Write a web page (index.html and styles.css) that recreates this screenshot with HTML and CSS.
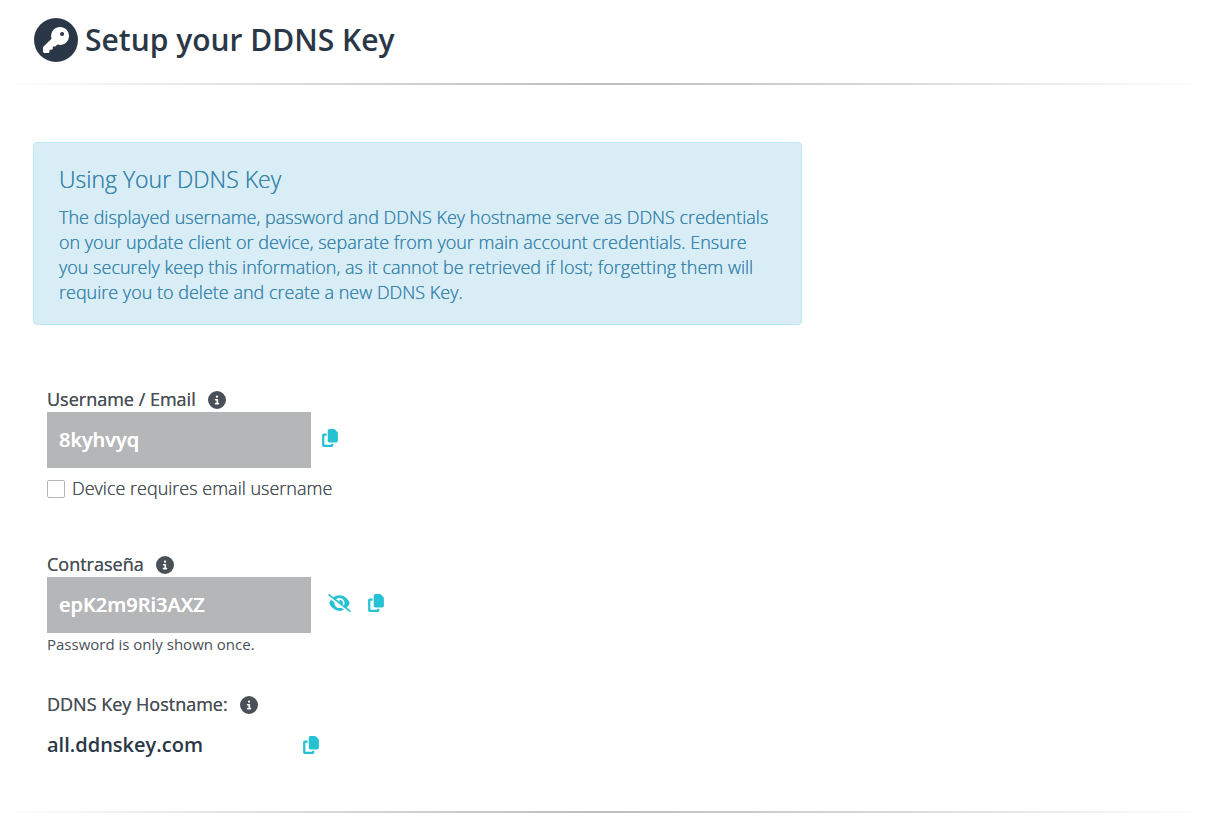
FILE: index.html
```html
<!DOCTYPE html>
<html lang="en">
<head>
<meta charset="utf-8">
<meta name="viewport" content="width=device-width, initial-scale=1">
<title>Setup your DDNS Key</title>
<link rel="stylesheet" href="styles.css">
</head>
<body>
<svg class="sprite" aria-hidden="true">
  <symbol id="copy" viewBox="0 0 448 512"><path d="M208 0L332.1 0c12.7 0 24.9 5.1 33.9 14.1l67.9 67.9c9 9 14.1 21.2 14.1 33.9L448 336c0 26.5-21.5 48-48 48l-192 0c-26.5 0-48-21.5-48-48l0-288c0-26.5 21.5-48 48-48zM48 128l80 0 0 64-64 0 0 256 192 0 0-32 64 0 0 48c0 26.5-21.5 48-48 48L48 512c-26.5 0-48-21.5-48-48L0 176c0-26.5 21.5-48 48-48z"/></symbol>
  <symbol id="info" viewBox="0 0 512 512"><path d="M256 512A256 256 0 1 0 256 0a256 256 0 1 0 0 512zM216 336h24V272H216c-13.3 0-24-10.7-24-24s10.7-24 24-24h48c13.3 0 24 10.7 24 24v88h8c13.3 0 24 10.7 24 24s-10.7 24-24 24H216c-13.3 0-24-10.7-24-24s10.7-24 24-24zm40-208a32 32 0 1 1 0 64 32 32 0 1 1 0-64z"/></symbol>
  <symbol id="eye-slash" viewBox="0 0 640 512"><path d="M38.8 5.1C28.4-3.1 13.3-1.2 5.1 9.2S-1.2 34.7 9.2 42.9l592 464c10.4 8.2 25.5 6.3 33.7-4.1s6.3-25.5-4.1-33.7L525.6 386.7c39.6-40.6 66.4-86.1 79.9-118.4c3.3-7.9 3.3-16.7 0-24.6c-14.9-35.7-46.2-87.7-93-131.1C465.5 68.8 400.8 32 320 32c-68.2 0-125 26.3-169.3 60.8L38.8 5.1zM223.1 149.5C248.6 126.2 282.7 112 320 112c79.5 0 144 64.5 144 144c0 24.9-6.3 48.3-17.4 68.7L408 294.5c8.4-19.3 10.6-41.4 4.8-63.3c-11.1-41.5-47.8-69.4-88.6-71.1c-5.8-.2-9.2 6.1-7.4 11.7c2.1 6.4 3.3 13.2 3.3 20.3c0 10.2-2.4 19.8-6.6 28.3l-90.3-70.8zM373 389.9c-16.4 6.5-34.3 10.1-53 10.1c-79.5 0-144-64.5-144-144c0-6.9 .5-13.6 1.4-20.2L83.1 161.5C60.3 191.2 44 220.8 34.5 243.7c-3.3 7.9-3.3 16.7 0 24.6c14.9 35.7 46.2 87.7 93 131.1C174.5 443.2 239.2 480 320 480c47.8 0 89.9-12.9 126.2-32.5L373 389.9z"/></symbol>
  <symbol id="key" viewBox="0 0 512 512"><path d="M336 352c97.2 0 176-78.8 176-176S433.2 0 336 0S160 78.8 160 176c0 18.7 2.9 36.8 8.3 53.7L7 391c-4.5 4.5-7 10.6-7 17v80c0 13.3 10.7 24 24 24h80c13.3 0 24-10.7 24-24V448h40c13.3 0 24-10.7 24-24V384h40c6.4 0 12.5-2.5 17-7l33.3-33.3c16.9 5.4 35 8.3 53.7 8.3zM376 96a40 40 0 1 1 0 80 40 40 0 1 1 0-80z"/></symbol>
</svg>

<header class="page-header">
  <span class="badge"><svg class="badge-icon" aria-hidden="true"><use href="#key"/></svg></span>
  <h1 class="title">Setup your DDNS Key</h1>
</header>
<hr class="rule">

<main class="content">
  <section class="notice">
    <h2 class="notice-title">Using Your DDNS Key</h2>
    <p class="notice-text">The displayed username, password and DDNS Key hostname serve as DDNS credentials on your update client or device, separate from your main account credentials. Ensure you securely keep this information, as it cannot be retrieved if lost; forgetting them will require you to delete and create a new DDNS Key.</p>
  </section>

  <form class="fields">
    <div class="field">
      <div class="label-row">
        <label for="username">Username / Email</label>
        <button type="button" class="icon-button" aria-label="About the username"><svg class="info-icon"><use href="#info"/></svg></button>
      </div>
      <div class="value-row">
        <input class="value-box" id="username" type="text" value="8kyhvyq" readonly>
        <button type="button" class="icon-button action" aria-label="Copy username"><svg class="copy-icon"><use href="#copy"/></svg></button>
      </div>
      <div class="check-row">
        <input class="check" id="email-username" type="checkbox">
        <label for="email-username">Device requires email username</label>
      </div>
    </div>

    <div class="field">
      <div class="label-row">
        <label for="password">Contraseña</label>
        <button type="button" class="icon-button" aria-label="About the password"><svg class="info-icon"><use href="#info"/></svg></button>
      </div>
      <div class="value-row value-row-wide">
        <input class="value-box" id="password" type="text" value="epK2m9Ri3AXZ" readonly>
        <button type="button" class="icon-button action" aria-label="Hide password"><svg class="eye-icon"><use href="#eye-slash"/></svg></button>
        <button type="button" class="icon-button action" aria-label="Copy password"><svg class="copy-icon"><use href="#copy"/></svg></button>
      </div>
      <p class="hint">Password is only shown once.</p>
    </div>

    <div class="field">
      <div class="label-row">
        <span>DDNS Key Hostname:</span>
        <button type="button" class="icon-button" aria-label="About the hostname"><svg class="info-icon"><use href="#info"/></svg></button>
      </div>
      <div class="host-row">
        <span class="host">all.ddnskey.com</span>
        <button type="button" class="icon-button action" aria-label="Copy hostname"><svg class="copy-icon"><use href="#copy"/></svg></button>
      </div>
    </div>
  </form>
</main>
<hr class="rule">
</body>
</html>
```
FILE: styles.css
```css
* {
  box-sizing: border-box;
}

body {
  margin: 0;
  background: #fff;
  color: #495057;
  font: 300 18px/25px "Open Sans", sans-serif;
}

h1,
h2,
p {
  margin: 0;
}

svg {
  display: block;
  fill: currentColor;
}

.sprite {
  position: absolute;
  width: 0;
  height: 0;
}

.page-header {
  display: flex;
  align-items: center;
  gap: 7px;
  padding: 18px 34px 21px;
  color: #2a3746;
}

.badge {
  display: grid;
  place-items: center;
  flex: none;
  width: 44px;
  height: 44px;
  border-radius: 50%;
  background: #2a3746;
  color: #fff;
}

.badge-icon {
  width: 26px;
  height: 26px;
}

.title {
  font-size: 30px;
  line-height: 44px;
  font-weight: 600;
}

.rule {
  height: 2px;
  margin: 0;
  border: 0;
  background: linear-gradient(to right, #fff, #d4d4d6 30%, #bebec2 50%, #d4d4d6 70%, #fff);
}

.content {
  padding: 57px 33px 52px;
}

.notice {
  max-width: 769px;
  padding: 20px 25px 19px;
  border: 1px solid #bce8f1;
  border-radius: 4px;
  background: #d9edf7;
  color: #3a87ad;
  text-shadow: 0 0 currentColor;
}

.notice-title {
  margin-bottom: 9px;
  font-size: 23px;
  line-height: 33px;
  font-weight: 300;
}

.fields {
  display: flex;
  flex-direction: column;
  padding: 62px 14px 0;
}

.field {
  display: flex;
  flex-direction: column;
  margin-bottom: 37px;
}

.field:first-child {
  margin-bottom: 51px;
}

.field:last-child {
  margin-bottom: 0;
}

.label-row {
  display: flex;
  align-items: center;
  gap: 12px;
  font-weight: 400;
  text-shadow: 0 0 currentColor;
}

.icon-button {
  flex: none;
  padding: 0;
  border: 0;
  background: none;
  color: inherit;
  cursor: pointer;
}

.action {
  color: #26c1d2;
}

.info-icon {
  width: 18px;
  height: 18px;
}

.copy-icon {
  width: 16px;
  height: 18px;
}

.eye-icon {
  width: 23px;
  height: 18px;
}

.value-row {
  display: flex;
  align-items: center;
  gap: 11px;
}

.value-row .action {
  margin-bottom: 4px;
}

.value-row-wide {
  gap: 17px;
}

.value-box {
  width: 264px;
  height: 56px;
  padding: 0 12px 2px;
  border: 0;
  border-radius: 0;
  background: #b5b6b8;
  color: #fff;
  font: 600 20px/28px "Open Sans", sans-serif;
  text-shadow: 0 0 currentColor;
}

.check-row {
  display: flex;
  align-items: center;
  gap: 7px;
  margin-top: 8px;
  text-shadow: 0 0 currentColor;
}

.check {
  appearance: none;
  width: 18px;
  height: 18px;
  margin: 0;
  border: 1px solid #b5b6b8;
  border-radius: 2px;
  background: #fff;
}

.check:checked {
  background: #26c1d2;
}

.hint {
  font-size: 15px;
  line-height: 22px;
  font-weight: 400;
}

.host-row {
  display: flex;
  align-items: center;
  gap: 12px;
  margin-top: 14px;
}

.host {
  width: 244px;
  color: #2a3746;
  font-size: 20px;
  line-height: 28px;
  font-weight: 600;
}
```
